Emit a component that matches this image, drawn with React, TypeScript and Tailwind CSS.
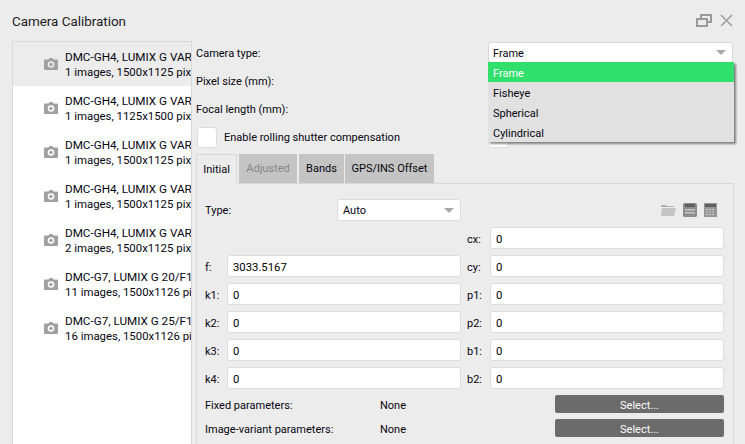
const rows = [
  ["DMC-GH4, LUMIX G VARIO 7-14/F4", "1 images, 1500x1125 pixels"],
  ["DMC-GH4, LUMIX G VARIO 7-14/F4", "1 images, 1125x1500 pixels"],
  ["DMC-GH4, LUMIX G VARIO 14-45/F3.5", "1 images, 1500x1125 pixels"],
  ["DMC-GH4, LUMIX G VARIO 14-45/F3.5", "1 images, 1500x1125 pixels"],
  ["DMC-GH4, LUMIX G VARIO 45-150/F4", "2 images, 1500x1125 pixels"],
  ["DMC-G7, LUMIX G 20/F1.7", "11 images, 1500x1126 pixels"],
  ["DMC-G7, LUMIX G 25/F1.7", "16 images, 1500x1126 pixels"],
];

function CameraIcon() {
  return (
    <svg width="14" height="12" viewBox="0 0 14 12" className="shrink-0">
      <path
        fillRule="evenodd"
        fill="#a0a0a0"
        d="M1 1.5h3.5L5.5 0h3l1 1.5H13a1 1 0 0 1 1 1V11a1 1 0 0 1-1 1H1a1 1 0 0 1-1-1V2.5a1 1 0 0 1 1-1ZM7 3.2a3.3 3.3 0 1 0 0 6.6 3.3 3.3 0 0 0 0-6.6Z"
      />
      <circle cx="7" cy="6.5" r="1.7" fill="#a0a0a0" />
    </svg>
  );
}

function Caret() {
  return <span className="w-0 h-0 border-x-[5px] border-x-transparent border-t-[5px] border-t-[#a8a8a8]" />;
}

function Field({ value = "" }: { value?: string }) {
  return (
    <input
      readOnly
      value={value}
      className="w-[234px] h-[22px] bg-white border border-[#dcdcdc] rounded-[3px] pl-[5px] pt-[2px] outline-none text-black text-[11.3px]"
    />
  );
}

function ParamRow({ a, av, b, bv }: { a?: string; av?: string; b: string; bv: string }) {
  return (
    <div className="flex items-center h-[22px]">
      <div className="w-[22px] pt-[2px]">{a}</div>
      {a ? <Field value={av} /> : <div className="w-[234px]" />}
      <div className="w-[29px] pl-[6px] pt-[2px]">{b}</div>
      <Field value={bv} />
    </div>
  );
}

function SelectRow({ label, none }: { label: string; none: string }) {
  return (
    <div className="flex items-center h-[18px]">
      <div className="w-[175px] pt-[2px]">{label}</div>
      <div className="w-[175px] pt-[2px]">{none}</div>
      <button className="w-[169px] h-[18px] pt-[2px] bg-[#6b6b6b] text-white rounded-[2px]">Select...</button>
    </div>
  );
}

export default function App() {
  return (
    <div className="w-[745px] h-[444px] overflow-hidden bg-[#ececec] flex flex-col text-[11px] leading-[15px] text-[#05050f] font-['Roboto',sans-serif]">
      <header className="h-[41px] shrink-0 flex items-center justify-between pl-[12px] pr-[12px]">
        <h1 className="text-[13.4px] font-normal pt-px text-[#1a1a1a]">Camera Calibration</h1>
        <div className="flex items-center gap-[8px]">
          <svg width="16" height="13" viewBox="0 0 16 13" fill="none" stroke="#9a9a9a" strokeWidth="2">
            <path d="M5 4V1h10v7h-3" />
            <rect x="1" y="5" width="10" height="7" />
          </svg>
          <svg width="13" height="13" viewBox="0 0 13 13" fill="none" stroke="#a0a0a0" strokeWidth="1.6">
            <path d="M1 1l11 11M12 1 1 12" />
          </svg>
        </div>
      </header>

      <div className="flex flex-1 min-h-0">
        <aside className="ml-[12px] w-[180px] shrink-0 bg-white border-l border-t border-r border-[#d8d8d8] overflow-hidden">
          {rows.map(([title, sub], i) => (
            <div
              key={i}
              className={`h-[44px] flex items-center gap-[7px] pl-[31px] whitespace-nowrap ${i === 0 ? "bg-[#ececec]" : ""}`}
            >
              <CameraIcon />
              <div className="text-[11.4px] pt-[2px]">
                <div className="text-[11.7px]">{title}</div>
                <div>{sub}</div>
              </div>
            </div>
          ))}
        </aside>

        <main className="relative flex-1 pl-[4px] pr-[11px] pt-px flex flex-col gap-[6px] min-w-0">
          <div className="flex items-center h-[22px]">
            <div className="w-[292px] pt-px">Camera type:</div>
            <div className="w-[245px] h-[21px] self-start bg-white border border-[#d8d8d8] rounded-[3px] pl-[4px] pr-[6px] flex items-center justify-between">
              <span className="pt-px">Frame</span>
              <Caret />
            </div>
          </div>
          <div className="flex items-center h-[22px]">
            <div className="w-[292px] pt-px">Pixel size (mm):</div>
            <div className="w-[245px] h-[22px] bg-white" />
          </div>
          <div className="flex items-center h-[22px]">
            <div className="w-[292px] pt-px">Focal length (mm):</div>
            <div className="w-[245px] h-[22px] bg-white" />
          </div>
          <div className="flex items-center h-[22px]">
            <div className="w-[292px] flex items-center gap-[7px] pl-px">
              <span className="w-[20px] h-[21px] bg-white border border-[#dcdcdc] rounded-[3px]" />
              <span className="pt-px">Enable rolling shutter compensation</span>
            </div>
            <span className="w-[21px] h-[21px] bg-white border border-[#dcdcdc] rounded-[3px]" />
          </div>

          <div className="flex flex-col flex-1 min-h-0">
            <div className="flex items-end h-[29px] gap-[2px] relative z-10">
              <div className="w-[41px] h-[30px] -mb-px flex items-center justify-center bg-[#ececec] border border-b-0 border-[#d8d8d8]">
                Initial
              </div>
              <div className="w-[58px] h-[29px] flex items-center justify-center bg-[#c4c4c4] text-[#858585]">Adjusted</div>
              <div className="w-[45px] h-[29px] flex items-center justify-center bg-[#c4c4c4]">Bands</div>
              <div className="w-[89px] -ml-px h-[29px] flex items-center justify-center bg-[#c4c4c4]">GPS/INS Offset</div>
            </div>
            <section className="flex-1 border border-b-0 border-[#d8d8d8] pl-[8px] pt-[15px] flex flex-col gap-[6px]">
              <div className="flex items-center h-[22px]">
                <div className="w-[132px] pt-px">Type:</div>
                <div className="w-[124px] h-[22px] bg-white border border-[#dcdcdc] rounded-[3px] pl-[5px] pr-[6px] flex items-center justify-between">
                  <span className="pt-px">Auto</span>
                  <Caret />
                </div>
                <div className="w-[259px] flex items-center justify-end gap-[7px]">
                  <svg width="15" height="13" viewBox="0 0 15 13">
                    <path fill="#b0b0b0" d="M0 1h5l1 1h7v1H0Z" />
                    <path fill="#c4c4c4" d="M1 4h14l-2 8H0Z" />
                  </svg>
                  <svg width="14" height="14" viewBox="0 0 14 14">
                    <rect width="14" height="14" rx="1.5" fill="#8c8c8c" />
                    <rect x="2" y="1" width="10" height="3" fill="#5f5f5f" />
                    <rect x="2" y="6" width="10" height="1.5" fill="#c8c8c8" />
                    <rect x="2" y="9" width="10" height="1.5" fill="#c8c8c8" />
                  </svg>
                  <svg width="13" height="14" viewBox="0 0 13 14" className="mr-[3px]">
                    <rect width="13" height="14" fill="#969696" />
                    <rect x="1" y="1" width="11" height="3" fill="#5f5f5f" />
                    <path stroke="#d0d0d0" strokeDasharray="2 1" d="M2 6.5h9M2 9h9M2 11.5h9" />
                  </svg>
                </div>
              </div>
              <ParamRow b="cx:" bv="0" />
              <ParamRow a="f:" av="3033.5167" b="cy:" bv="0" />
              <ParamRow a="k1:" av="0" b="p1:" bv="0" />
              <ParamRow a="k2:" av="0" b="p2:" bv="0" />
              <ParamRow a="k3:" av="0" b="b1:" bv="0" />
              <ParamRow a="k4:" av="0" b="b2:" bv="0" />
              <SelectRow label="Fixed parameters:" none="None" />
              <SelectRow label="Image-variant parameters:" none="None" />
            </section>
          </div>

          <ul className="absolute left-[296px] top-[21px] w-[246px] h-[80px] bg-[#e1e1e1] shadow-[2px_2px_2px_rgba(0,0,0,0.45)]">
            <li className="h-[20px] pl-[5px] pt-[2px] flex items-center bg-[#30df6c] text-white">Frame</li>
            <li className="h-[20px] pl-[5px] pt-[2px] flex items-center">Fisheye</li>
            <li className="h-[20px] pl-[5px] pt-[2px] flex items-center">Spherical</li>
            <li className="h-[20px] pl-[5px] pt-[2px] flex items-center">Cylindrical</li>
          </ul>
        </main>
      </div>
    </div>
  );
}
